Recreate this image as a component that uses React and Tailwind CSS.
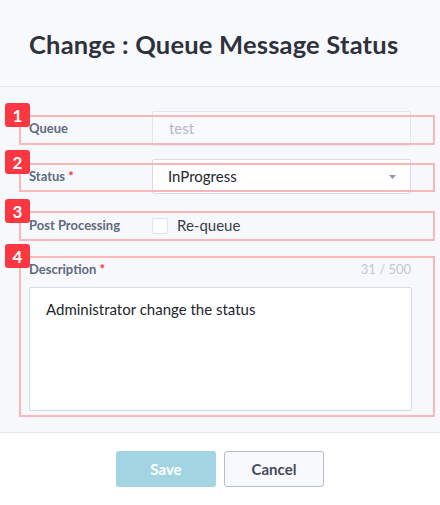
import React from "react";

const font = { fontFamily: '"Lato", "Noto Sans", sans-serif' };

function Badge({ n, top }) {
  return (
    <div
      className="absolute left-[5px] w-[25px] h-[24px] rounded-[3px] bg-[#fd3742] text-white font-bold text-[17px] flex items-center justify-center leading-none"
      style={{ top }}
    >
      {n}
    </div>
  );
}

export default function App() {
  return (
    <div className="relative w-[440px] h-[505px] bg-white flex flex-col" style={font}>
      <div className="h-[87px] shrink-0 bg-[#f8f9fc] border-b border-[#e6e8ef] flex items-center pl-[29px] pt-[2px]">
        <h1 className="text-[25.5px] font-bold text-[#2e323c] tracking-[0.2px]">Change : Queue Message Status</h1>
      </div>
      <div className="h-[346px] shrink-0 bg-[#f7f8fc] border-b border-[#e6e8ef] px-[29px] pt-[24px] flex flex-col">
        <div className="flex items-center h-[35px]">
          <div className="w-[123px] text-[13px] font-bold text-[#5f6a7d]">Queue</div>
          <div className="w-[259px] h-[35px] border border-[#e3e5ed] bg-[#f9fafd] rounded-[2px] flex items-center pl-[16px] text-[15px] text-[#b3b8c8]">test</div>
        </div>
        <div className="flex items-center h-[35px] mt-[13px]">
          <div className="w-[123px] text-[13px] font-bold text-[#5f6a7d]">
            Status <span className="text-[#f0323e]">*</span>
          </div>
          <div className="w-[259px] h-[35px] border border-[#d8dbe4] bg-white rounded-[2px] flex items-center pl-[15px] pr-[14px] text-[15px] text-[#23262e]">
            <span className="flex-1">InProgress</span>
            <svg width="7" height="4" viewBox="0 0 7 4"><path d="M0 0h7L3.5 4z" fill="#8f96ad" /></svg>
          </div>
        </div>
        <div className="flex items-center h-[35px] mt-[14px]">
          <div className="w-[123px] text-[13px] font-bold text-[#5f6a7d]">Post Processing</div>
          <div className="w-[16px] h-[16px] border border-[#dfe2ea] bg-white rounded-[2px]" />
          <div className="ml-[9px] text-[15px] text-[#3a3e48]">Re-queue</div>
        </div>
        <div className="flex items-center justify-between h-[16px] mt-[19px]">
          <div className="text-[13px] font-bold text-[#5f6a7d]">
            Description <span className="text-[#f0323e]">*</span>
          </div>
          <div className="text-[13px] text-[#c3c7d2]">31 / 500</div>
        </div>
        <div className="mt-[9px] w-[383px] h-[124px] border border-[#d8dbe4] bg-white rounded-[2px] px-[16px] pt-[10px] text-[15px] text-[#23262e]">
          Administrator change the status
        </div>
      </div>
      <div className="flex-1 bg-white flex justify-center gap-[8px] pt-[18px]">
        <button className="w-[100px] h-[36px] rounded-[3px] bg-[#a2d5e1] text-white font-bold text-[15px]">Save</button>
        <button className="w-[100px] h-[36px] rounded-[3px] bg-[#f8f9fc] border border-[#b9bccf] text-[#474a5a] font-bold text-[15px]">Cancel</button>
      </div>

      <div className="absolute left-[19px] top-[115px] w-[416px] h-[30px] border-2 border-[#fbb6b9]" />
      <div className="absolute left-[19px] top-[163px] w-[416px] h-[29px] border-2 border-[#fbb6b9]" />
      <div className="absolute left-[19px] top-[211px] w-[416px] h-[30px] border-2 border-[#fbb6b9]" />
      <div className="absolute left-[19px] top-[256px] w-[416px] h-[161px] border-2 border-[#fbb6b9]" />
      <Badge n="1" top={103} />
      <Badge n="2" top={150} />
      <Badge n="3" top={199} />
      <Badge n="4" top={244} />
    </div>
  );
}
